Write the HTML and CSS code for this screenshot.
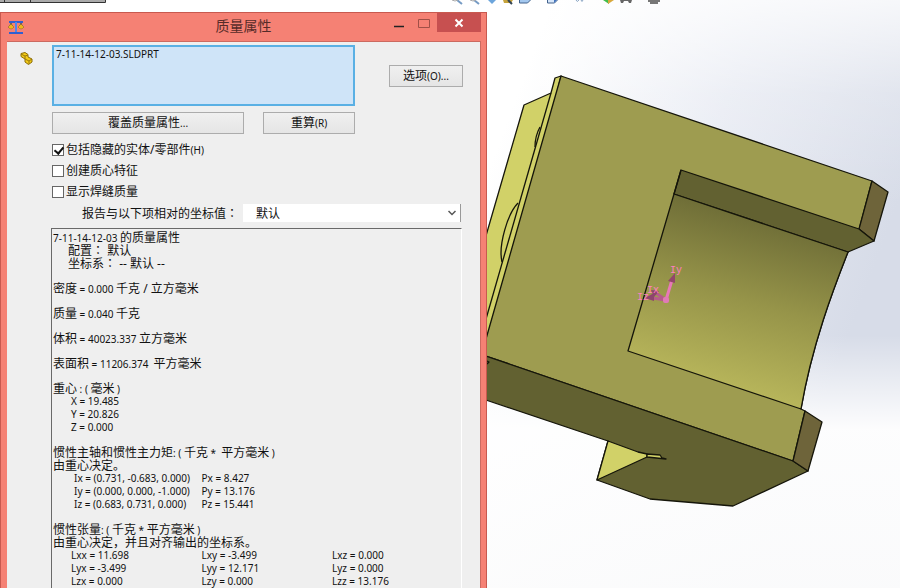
FILE: index.html
```html
<!DOCTYPE html>
<html lang="zh-CN">
<head>
<meta charset="utf-8">
<title>质量属性</title>
<link rel="stylesheet" href="styles.css">
</head>
<body>
<svg class="scene" viewBox="0 0 900 588" preserveAspectRatio="xMinYMin slice" role="img" aria-label="SLDPRT">
  <defs>
    <linearGradient id="sky" gradientUnits="userSpaceOnUse" x1="530" y1="60" x2="900" y2="200">
      <stop offset="0" stop-color="#fff"/><stop offset=".5" stop-color="#e8ebf3"/><stop offset="1" stop-color="#d7dce8"/>
    </linearGradient>
    <linearGradient id="haze" x1="0" y1="0" x2="0" y2="1">
      <stop offset="0" stop-color="#fff" stop-opacity=".75"/><stop offset=".16" stop-color="#fff" stop-opacity=".2"/>
      <stop offset=".35" stop-color="#fff" stop-opacity="0"/><stop offset=".57" stop-color="#fff" stop-opacity="0"/>
      <stop offset=".73" stop-color="#fff" stop-opacity=".94"/><stop offset="1" stop-color="#fdfdfd" stop-opacity=".92"/>
    </linearGradient>
    <linearGradient id="bore" gradientUnits="userSpaceOnUse" x1="775" y1="215" x2="728" y2="390">
      <stop offset="0" stop-color="#6c6b36"/><stop offset=".5" stop-color="#969449"/><stop offset="1" stop-color="#b8b65b"/>
    </linearGradient>
  </defs>
  <rect width="900" height="588" fill="url(#sky)"/>
  <rect width="900" height="588" fill="url(#haze)"/>

  <g class="toolbar">
    <path d="M0 0H105V2H0z" fill="#aaa"/>
    <path d="M0 2.500H105.500V0M4.500 0V2M30.500 0V2" fill="none" stroke="#333"/>
    <g fill="none" stroke-width="2">
      <path d="M457 0l5 4M474 0l5 4" stroke="#769bc4"/>
      <path d="M452 0q3 2 6 0M470 0q3 2 6 0" stroke="#aaa" stroke-width="1"/>
      <path d="M576 0q1 3 3 0M581 0q1 3 2 0" stroke="#8ba6c4" stroke-width="1"/>
    </g>
    <path d="M488 0h8l-4 4z" fill="#6ca5dc"/>
    <path d="M503 0h10l-2 3h-7z" fill="#c6a33c"/><path d="M508 0l4 4" stroke="#345" stroke-width="2"/>
    <path d="M519.500 -2v5h8l4-4" fill="#a4c8ef" stroke="#42638d"/>
    <path d="M547.500 -2v5h7l4-4" fill="#d6e6fa" stroke="#42638d"/><path d="M554 3l4-4h-4z" fill="#4474be"/>
    <path d="M603 0h6v4z" fill="#43bd4a"/><path d="M608 4l6-4h-6z" fill="#d8a83c"/>
    <path d="M620 0h12l-1 3h-2l-1-2h-4l-1 2h-2z" fill="#666"/>
    <path d="M648 0h12v2h-12zM650 2h8v2h-8z" fill="#777"/>
  </g>

  <g stroke="#15150a" stroke-width="1.300" stroke-linejoin="round">
    <path d="M561 76l-6 2-4 15-27 12-50 172v100h16z" fill="#d1d168"/>
    <path d="M551 93L484 326" fill="none"/>
    <path d="M540 127q-5 9-5 20" fill="none"/>
    <path d="M518 203C508 213 498 245 502 262" fill="none"/>
    <path d="M561 76L872 181L859 230L848 252C833 290 812 345 801 409L805 411L793 461L474 352V381z" fill="#9e9c50"/>
    <path d="M474 352L793 461L808 471L733 506L650 499L597 480L608 441L474 396z" fill="#626131"/>
    <path d="M872 181L888 192L874 241L859 229z" fill="#6e643a"/>
    <path d="M681 170L859 229L874 241L848 252L674 194z" fill="#626131"/>
    <path d="M674 194L848 252C833 290 812 345 801 409L628 351z" fill="url(#bore)"/>
    <path d="M681 170L674 194" fill="none"/>
    <path d="M805 411L822 422L808 471L793 461z" fill="#6e643a"/>
    <path d="M608 441L638 452L647 454V457L597 480z" fill="#d1d168"/>
    <path d="M647 454L660 455L662 458L666 459L647 457z" fill="#d1d168"/>
    <path d="M487 361l2 1-2 2" fill="none"/>
  </g>

  <g class="triad">
    <path d="M666 300L672 280" stroke="#e878b8" stroke-width="3"/>
    <path d="M675 273L668 281L675 283z" fill="#92466b"/>
    <path d="M666 300L646 297M666 300L653 291" stroke="#b65b8b" stroke-width="3"/>
    <path d="M645 298l9-5v8zM651 290l8 1-5 6z" fill="#8e446d"/>
    <rect x="663" y="297" width="6" height="6" rx="2" fill="#e07bb6"/>
    <text x="670" y="273">Iy</text><text x="647" y="293">Ix</text><text x="637" y="300">Iz</text>
  </g>
</svg>

<section class="dialog" aria-labelledby="dialog-title">
  <header class="titlebar">
    <svg class="scales" viewBox="0 0 16 14" aria-hidden="true">
      <path d="M1 2H15M8 1V12M1 13H15" stroke="#315fd0" stroke-width="2"/>
      <path d="M3 3L1 8M3 3L5 8M13 3L11 8M13 3L15 8" stroke="#555" fill="none"/>
      <path d="M0 7L3 4L6 7Q3 11 0 7M10 7L13 4L16 7Q13 11 10 7" fill="#f0b51d" stroke="#8b6422" stroke-width=".5"/>
      <path d="M7 2H9V12H7z" fill="#4d87ed"/>
    </svg>
    <h1 id="dialog-title">质量属性</h1>
    <div class="window-controls">
      <button class="control" aria-label="最小化"><svg viewBox="0 0 12 10"><path d="M1 8.500H11" stroke="#222" stroke-width="1.500"/></svg></button>
      <button class="control" aria-label="最大化"><svg viewBox="0 0 12 10"><path d="M.5 1.500H11.500V9.500H.5z" fill="none" stroke="#a05047"/></svg></button>
      <button class="control close" aria-label="关闭"><svg viewBox="0 0 12 10"><path d="M2.500 1.500L9.500 8.500M9.500 1.500L2.500 8.500" stroke="#fff" stroke-width="2"/></svg></button>
    </div>
  </header>

  <div class="body">
    <svg class="part-icon" viewBox="0 0 13 13" aria-hidden="true">
      <path d="M1 1.500L5 .5L8 2.500V5L12 7V10L8.500 12.500L5 10V7L1 4.500z" fill="#f4cc16" stroke="#8b6c08"/>
      <path d="M1 2l4 2 3-1M5 4v3l4 2 3-2M9 9v3" fill="none" stroke="#9a780c"/>
    </svg>
    <div class="content">
      <div class="selection">
        <div class="picker">
          <div class="file-list">7-11-14-12-03.SLDPRT</div>
          <div class="actions">
            <button class="push override"><span class="zh">覆盖质量属性</span>...</button>
            <button class="push recalc"><span class="zh">重算</span>(R)</button>
          </div>
        </div>
        <button class="push options"><span class="zh">选项</span>(O)...</button>
      </div>

      <div class="checks">
        <label><input type="checkbox" checked><span><span class="zh">包括隐藏的实体/零部件</span>(H)</span></label>
        <label><input type="checkbox"><span class="zh">创建质心特征</span></label>
        <label><input type="checkbox"><span class="zh">显示焊缝质量</span></label>
      </div>

      <div class="coordinate">
        <label class="zh" for="system">报告与以下项相对的坐标值<span class="colon" lang="zh-TW">：</span></label>
        <div class="combo">
          <select id="system" class="zh"><option>默认</option></select>
          <svg viewBox="0 0 8 6" aria-hidden="true"><path d="M.5 1L4 4.500L7.500 1" fill="none" stroke="#555" stroke-width="1.500"/></svg>
        </div>
      </div>

      <div class="report">
        <div>
          <p>7-11-14-12-03 <span class="zh">的质量属性</span></p>
          <p class="indent zh">配置<span class="colon" lang="zh-TW">：</span> 默认</p>
          <p class="indent zh">坐标系<span class="colon" lang="zh-TW">：</span> -- 默认 --</p>
        </div>
        <p><span class="zh">密度</span> = 0.000 <span class="zh">千克 / 立方毫米</span></p>
        <p><span class="zh">质量</span> = 0.040 <span class="zh">千克</span></p>
        <p><span class="zh">体积</span> = 40023.337 <span class="zh">立方毫米</span></p>
        <p><span class="zh">表面积</span> = 11206.374 &nbsp;<span class="zh">平方毫米</span></p>
        <div>
          <p><span class="zh">重心</span> : ( <span class="zh">毫米</span> )</p>
          <p class="value">X = 19.485</p>
          <p class="value">Y = 20.826</p>
          <p class="value">Z = 0.000</p>
        </div>
        <div>
          <p><span class="zh">惯性主轴和惯性主力矩</span>: ( <span class="zh">千克</span> * &nbsp;<span class="zh">平方毫米</span> )</p>
          <p class="zh">由重心决定。</p>
          <table class="axes">
            <tr><td>Ix = (0.731, -0.683, 0.000)</td><td>Px = 8.427</td><td></td></tr>
            <tr><td>Iy = (0.000, 0.000, -1.000)</td><td>Py = 13.176</td><td></td></tr>
            <tr><td>Iz = (0.683, 0.731, 0.000)</td><td>Pz = 15.441</td><td></td></tr>
          </table>
        </div>
        <div>
          <p><span class="zh">惯性张量</span>: ( <span class="zh">千克</span> * <span class="zh">平方毫米</span> )</p>
          <p class="zh">由重心决定，并且对齐输出的坐标系。</p>
          <table>
            <tr><td>Lxx = 11.698</td><td>Lxy = -3.499</td><td>Lxz = 0.000</td></tr>
            <tr><td>Lyx = -3.499</td><td>Lyy = 12.171</td><td>Lyz = 0.000</td></tr>
            <tr><td>Lzx = 0.000</td><td>Lzy = 0.000</td><td>Lzz = 13.176</td></tr>
          </table>
        </div>
      </div>
    </div>
  </div>
</section>
</body>
</html>
```
FILE: styles.css
```css
* { box-sizing: border-box; }
body {
  margin: 0;
  height: 100vh;
  overflow: hidden;
  padding-top: 12px;
  font: 10px/13px "Noto Sans", "Noto Sans CJK SC", sans-serif;
  color: #111;
}
button, select, input { font: inherit; color: inherit; margin: 0; }
p, h1 { margin: 0; }
.zh { font-size: 12px; }
.colon { font-family: "Noto Sans CJK TC", sans-serif; line-height: 1; }

.scene { position: absolute; inset: 0; width: 100%; height: 100%; z-index: -1; }
.triad text { font: 10px "Liberation Mono", monospace; fill: #ff7fc2; }

.dialog {
  display: flex;
  flex-direction: column;
  width: 54.1%;
  height: 100%;
  padding: 0 5px 0 6px;
  background: #f58174;
  border: 1px solid #c8594f;
  border-bottom: 0;
}
.titlebar { display: flex; align-items: center; height: 28px; }
.scales { width: 16px; height: 14px; margin-left: 1px; }
.titlebar h1 { flex: 1; font-size: 14px; font-weight: 400; line-height: 26px; height: 28px; text-align: center; color: #552b28; padding-left: 76px; }
.window-controls { display: flex; align-self: flex-start; }
.control { display: grid; place-items: center; width: 25px; height: 19px; padding: 0; border: 0; background: none; }
.control svg { width: 12px; height: 10px; }
.control.close { width: 44px; background: #c75050; }

.body {
  flex: 1;
  min-height: 0;
  display: flex;
  background: #efefef;
  border: 1px solid #cc6a60;
  border-width: 1px 1px 0 0;
}
.part-icon { flex: none; width: 13px; height: 13px; margin: 10px 19px 0 13px; }
.content { flex: 1; min-width: 0; display: flex; flex-direction: column; padding: 3px 17px 0 0; }

.selection { display: flex; gap: 34px; }
.picker { flex: 1; display: grid; gap: 6px; }
.file-list { height: 61px; padding: 1px 2px; background: #cfe4f8; border: 2px solid #5ab0e4; }
.actions { display: flex; gap: 19px; }
.push {
  height: 22px;
  padding: 0;
  border: 1px solid #acacac;
  background: linear-gradient(#f0f0f0, #e5e5e5);
  line-height: 18px;
}
.override { flex: 193; }
.recalc { flex: 91; }
.options { width: 74px; margin-top: 20px; }

.checks { display: grid; margin-top: 5px; }
.checks label { display: flex; align-items: center; gap: 2px; height: 21px; }
.checks input {
  appearance: none;
  width: 12px;
  height: 12px;
  border: 1px solid #666;
  background: #fff;
}
.checks input:checked::before {
  content: "";
  display: block;
  width: 4px;
  height: 7px;
  margin: 0 3px;
  border: solid #111;
  border-width: 0 2px 2px 0;
  transform: rotate(40deg);
}

.coordinate { display: flex; align-items: center; gap: 5px; height: 22px; padding: 0 2px 0 30px; }
.combo { flex: 1; position: relative; }
.combo select {
  appearance: none;
  display: block;
  width: 100%;
  height: 18px;
  padding: 0 13px;
  border: 0;
  border-right: 1px solid #999;
  border-radius: 0;
  background: #fff;
}
.combo svg { position: absolute; right: 5px; top: 6px; width: 8px; height: 6px; pointer-events: none; }

.report {
  flex: 1;
  min-height: 0;
  overflow: hidden;
  display: flex;
  flex-direction: column;
  gap: 12px;
  margin: 4px 1px 0 -1px;
  padding: 2px 0 0 1px;
  border: 1px solid #696969;
  border-right-color: #fff;
  border-bottom: 0;
}
.report > * { flex: none; }
.report p { height: 13px; white-space: nowrap; }
.indent { padding-left: 15px; }
.value { padding-left: 18px; }
table { width: 100%; table-layout: fixed; border-collapse: collapse; }
td { width: 32%; height: 13px; padding: 0 0 0 18px; white-space: nowrap; }
td:last-child { width: auto; }
.axes td:first-child { padding-left: 21px; }
```
